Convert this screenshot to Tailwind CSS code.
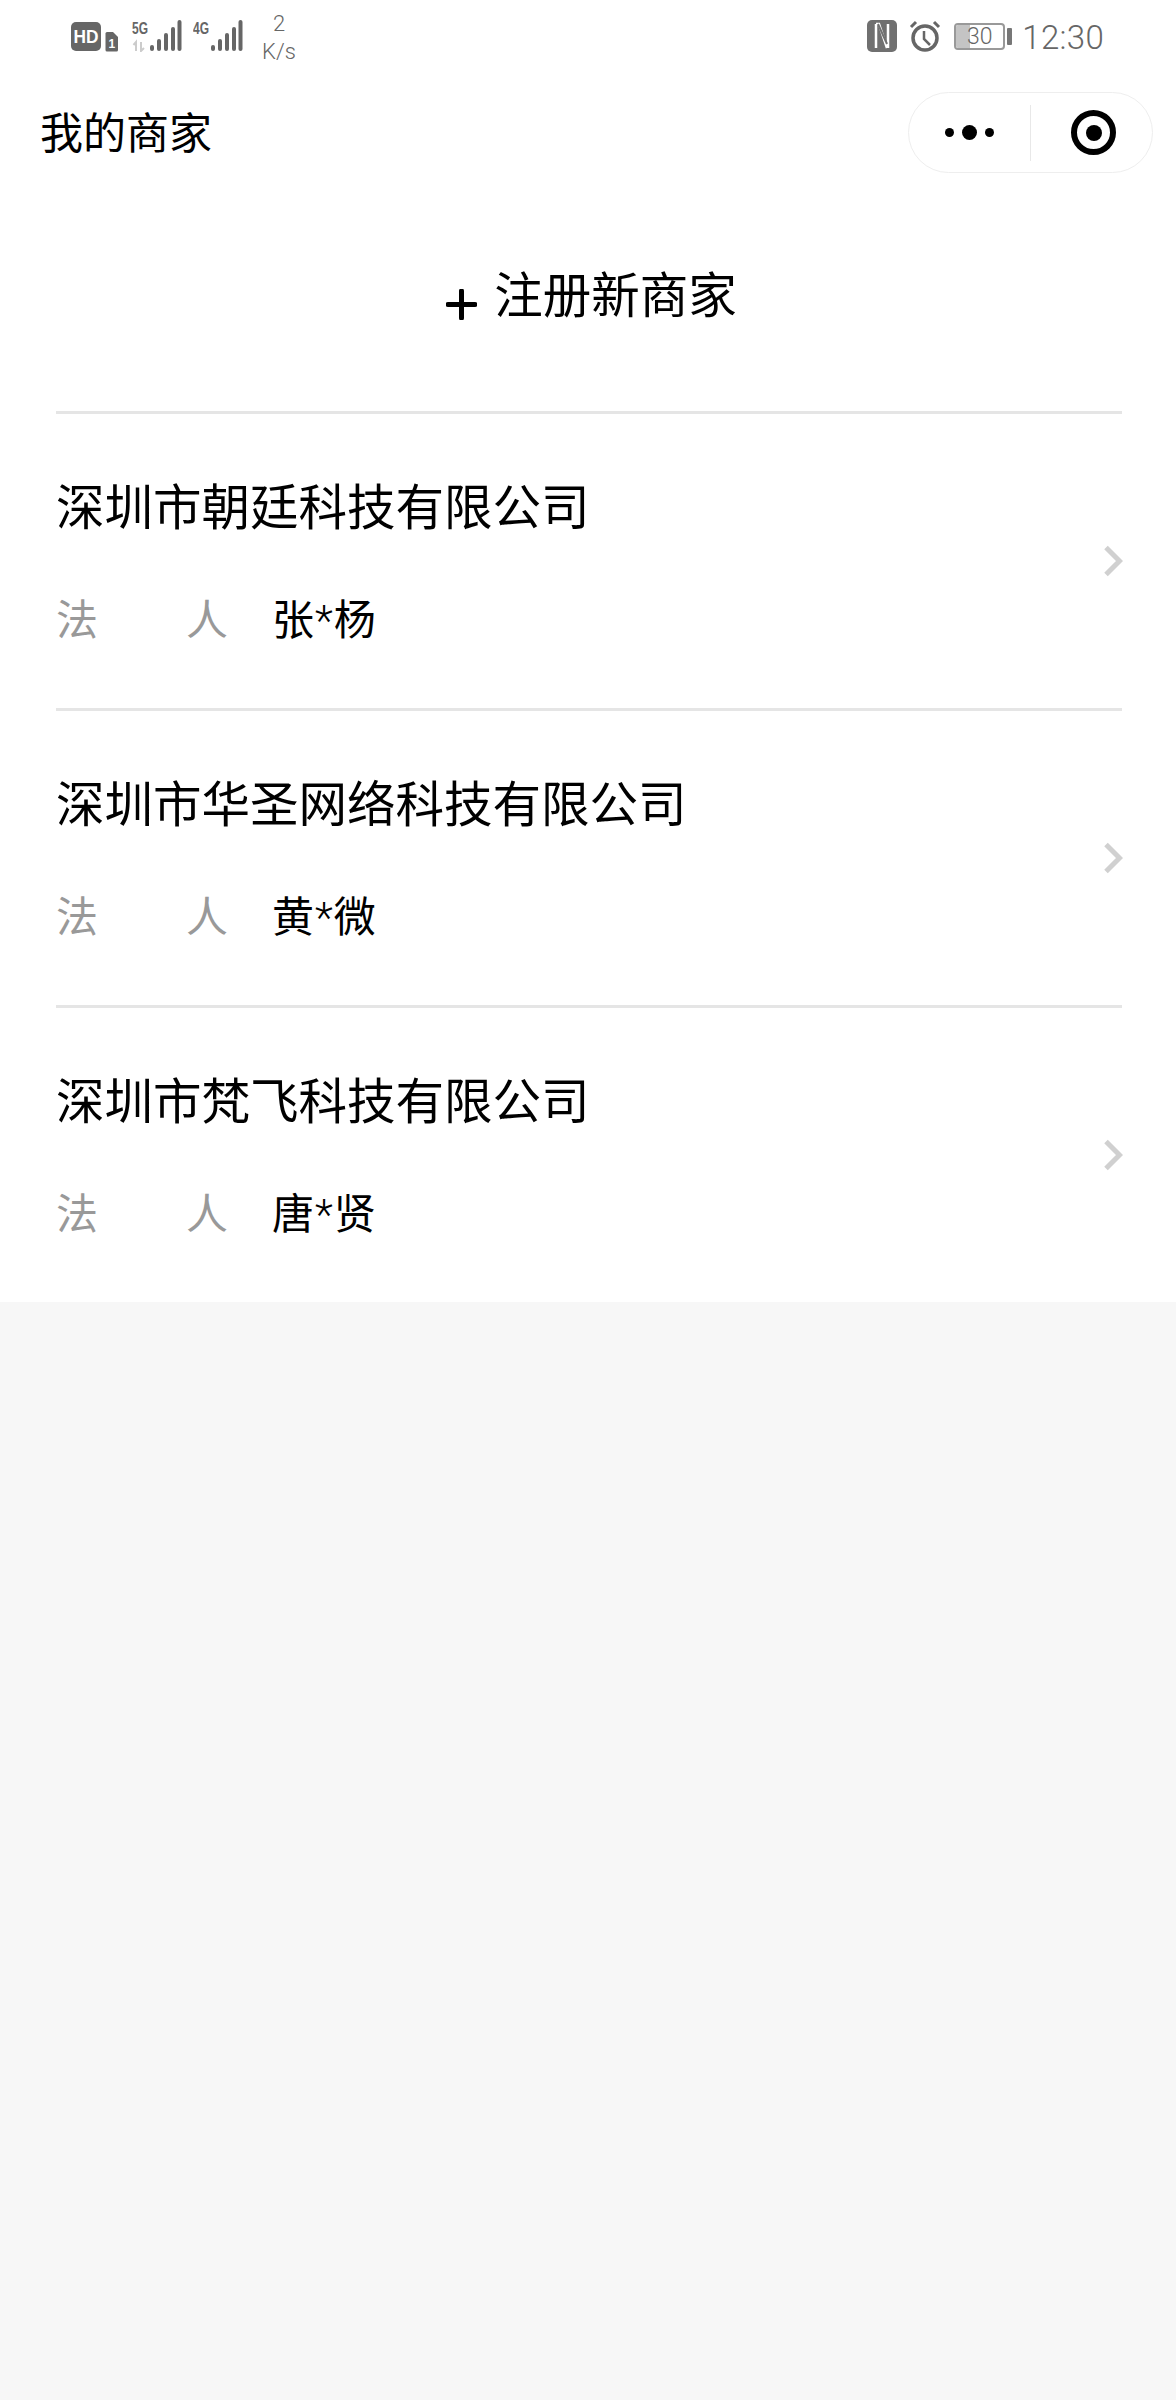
<!doctype html>
<html><head><meta charset="utf-8"><script src="https://cdn.jsdelivr.net/npm/@tailwindcss/browser@4"></script></head>
<body class="bg-[#f7f7f7] font-['Noto_Sans_CJK_SC','Noto_Sans',sans-serif]">
<div class="w-[1176px] h-[2400px] flex flex-col">
  <div class="bg-white h-[1302px] flex flex-col overflow-hidden">
    <!-- status bar -->
    <div class="h-[72px] flex items-start justify-between pl-[71px] text-[#666]">
      <div class="flex items-start pt-[20px]">
        <svg width="48" height="32" viewBox="0 0 48 32"><rect x="0" y="2" width="30" height="29" rx="5" fill="#666"/><text x="2.500" y="23" font-size="18" font-weight="700" fill="#fff" font-family="Liberation Sans" textLength="25" lengthAdjust="spacingAndGlyphs">HD</text><path d="M36 12h6l5 5v13a1.500 1.500 0 0 1-1.500 1.500h-9.500a1.500 1.500 0 0 1-1.500-1.500V13.500a1.500 1.500 0 0 1 1.500-1.500z" fill="#666"/><text x="37.500" y="28" font-size="12" font-weight="700" fill="#fff" font-family="Liberation Sans">1</text></svg>
        <svg width="50" height="32" viewBox="0 0 50 32" class="ml-[13px]"><text x="0" y="14" font-size="17" font-weight="700" fill="#666" font-family="Liberation Sans" textLength="16" lengthAdjust="spacingAndGlyphs">5G</text><path d="M4 31v-9M1.500 25l2.500-3 0 9M9 22v9l3-3" stroke="#ccc" stroke-width="2" fill="none"/><g fill="#666"><rect x="18" y="25" width="4" height="6" rx="2"/><rect x="25" y="19" width="4" height="12" rx="2"/><rect x="32" y="13" width="4" height="18" rx="2"/><rect x="39" y="7" width="4" height="24" rx="2"/><rect x="45.500" y="0" width="4" height="31" rx="2"/></g></svg>
        <svg width="50" height="32" viewBox="0 0 50 32" class="ml-[11px]"><text x="0" y="14" font-size="17" font-weight="700" fill="#666" font-family="Liberation Sans" textLength="16" lengthAdjust="spacingAndGlyphs">4G</text><g fill="#666"><rect x="18" y="25" width="4" height="6" rx="2"/><rect x="25" y="19" width="4" height="12" rx="2"/><rect x="32" y="13" width="4" height="18" rx="2"/><rect x="39" y="7" width="4" height="24" rx="2"/><rect x="45.500" y="0" width="4" height="31" rx="2"/></g></svg>
        <div class="ml-[19px] -mt-[10px] w-[34px] flex flex-col items-center text-[22px] leading-[28px] font-['Roboto',sans-serif] font-light text-[#666]"><span>2</span><span>K/s</span></div>
      </div>
      <div class="flex items-start pt-[20px] pr-[72px]">
        <svg width="30" height="32" viewBox="0 0 30 32"><rect width="30" height="32" rx="5" fill="#707070"/><path d="M9 4h3l8 24M21 4v24M9 4v24" stroke="#fff" stroke-width="2.500" fill="none"/><path d="M11 4l9 20" stroke="#707070" stroke-width="2" fill="none"/></svg>
        <svg width="32" height="32" viewBox="0 0 32 32" class="ml-[12px]"><circle cx="16" cy="18" r="12" fill="none" stroke="#666" stroke-width="3.500"/><path d="M15 11v8l6 6" stroke="#666" stroke-width="2.500" fill="none"/><path d="M2 7l5-5M30 7l-5-5" stroke="#666" stroke-width="3"/></svg>
        <div class="ml-[13px] mt-[3px] relative w-[51px] h-[27px] border-2 border-[#999] rounded-[4px] overflow-hidden flex items-center justify-center text-[23px] leading-none font-['Roboto',sans-serif] font-light"><div class="absolute left-0 top-0 bottom-0 w-[14px] bg-[#c4c4c4]"></div><span class="relative">30</span></div>
        <div class="ml-[2px] mt-[8px] w-[5px] h-[17px] bg-[#777] rounded-[1px]"></div>
        <div class="ml-[10px] mt-[2px] text-[33px] leading-[32px] tracking-[0.3px] font-['Roboto',sans-serif] font-light">12:30</div>
      </div>
    </div>
    <!-- title bar -->
    <div class="h-[100px] relative flex items-start pl-[40px]">
      <div class="text-[43px] leading-[50px] mt-[33px] text-black">我的商家</div>
      <div class="absolute left-[908px] top-[20px] w-[245px] h-[81px] rounded-full border border-[#eee] flex items-center">
        <div class="w-[122px] h-[56px] border-r border-[#e8e8e8] flex items-center justify-center gap-[8px]"><span class="w-[9px] h-[9px] rounded-full bg-black"></span><span class="w-[15px] h-[15px] rounded-full bg-black"></span><span class="w-[9px] h-[9px] rounded-full bg-black"></span></div>
        <div class="flex-1 flex items-center justify-center pl-[4px]"><span class="w-[45px] h-[45px] rounded-full border-[6px] border-black flex items-center justify-center"><span class="w-[16px] h-[16px] rounded-full bg-black"></span></span></div>
      </div>
    </div>
    <!-- register -->
    <div class="h-[242px] flex items-start justify-center ml-[56px] mr-[54px] pl-[5px] border-b-[3px] border-[#e5e5e5] text-black">
      <svg width="31" height="31" viewBox="0 0 31 31" class="mr-[17px] mt-[117px]"><path d="M2 15.500h27M15.500 2v27" stroke="#000" stroke-width="5" stroke-linecap="round"/></svg>
      <span class="text-[48.500px] leading-[60px] mt-[90px]">注册新商家</span>
    </div>
    <!-- rows -->
    <div class="pl-[56px] pr-[54px]">
      <div class="h-[297px] border-b-[3px] border-[#e5e5e5] flex items-start justify-between">
        <div>
          <div class="mt-[60px] text-[48.500px] leading-[60px] text-black">深圳市朝廷科技有限公司</div>
          <div class="mt-[57px] flex text-[42px] leading-[52px]"><span class="w-[216px] flex justify-between pr-[44px] text-[#999]"><span>法</span><span>人</span></span><span class="text-black">张<span class="px-[1px] font-['Roboto',sans-serif] font-light">*</span>杨</span></div>
        </div>
        <svg width="20" height="32" viewBox="0 0 20 32" class="mt-[131px] -mr-[1px]"><path d="M3 2.500L16.500 16L3 29.500" fill="none" stroke="#d0d0d0" stroke-width="5"/></svg>
      </div>
      <div class="h-[297px] border-b-[3px] border-[#e5e5e5] flex items-start justify-between">
        <div>
          <div class="mt-[60px] text-[48.500px] leading-[60px] text-black">深圳市华圣网络科技有限公司</div>
          <div class="mt-[57px] flex text-[42px] leading-[52px]"><span class="w-[216px] flex justify-between pr-[44px] text-[#999]"><span>法</span><span>人</span></span><span class="text-black">黄<span class="px-[1px] font-['Roboto',sans-serif] font-light">*</span>微</span></div>
        </div>
        <svg width="20" height="32" viewBox="0 0 20 32" class="mt-[131px] -mr-[1px]"><path d="M3 2.500L16.500 16L3 29.500" fill="none" stroke="#d0d0d0" stroke-width="5"/></svg>
      </div>
      <div class="h-[294px] flex items-start justify-between">
        <div>
          <div class="mt-[60px] text-[48.500px] leading-[60px] text-black">深圳市梵飞科技有限公司</div>
          <div class="mt-[57px] flex text-[42px] leading-[52px]"><span class="w-[216px] flex justify-between pr-[44px] text-[#999]"><span>法</span><span>人</span></span><span class="text-black">唐<span class="px-[1px] font-['Roboto',sans-serif] font-light">*</span>贤</span></div>
        </div>
        <svg width="20" height="32" viewBox="0 0 20 32" class="mt-[131px] -mr-[1px]"><path d="M3 2.500L16.500 16L3 29.500" fill="none" stroke="#d0d0d0" stroke-width="5"/></svg>
      </div>
    </div>
  </div>
</div>
</body></html>
